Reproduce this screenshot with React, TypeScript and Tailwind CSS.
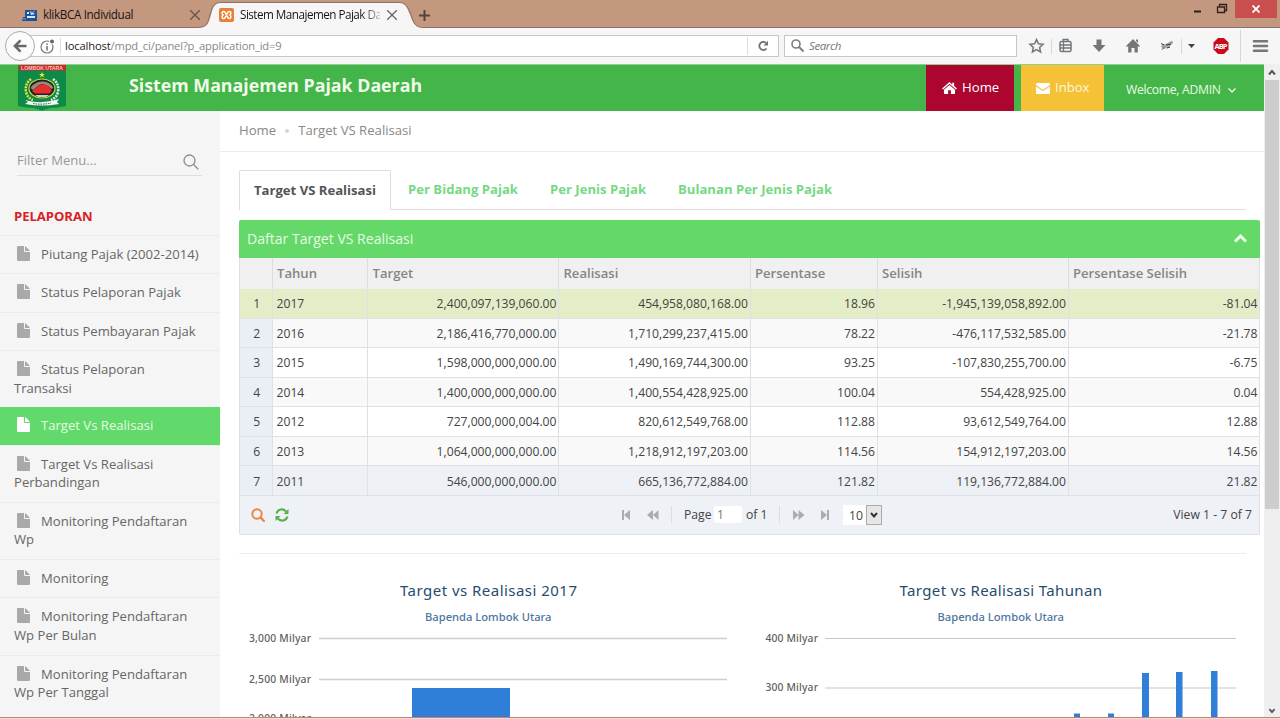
import React from "react";

const reports: { lines: string[]; active?: boolean; h: string }[] = [
  { lines: ["Piutang Pajak (2002-2014)"], h: "h-[38.4px]" },
  { lines: ["Status Pelaporan Pajak"], h: "h-[38.4px]" },
  { lines: ["Status Pembayaran Pajak"], h: "h-[38.4px]" },
  { lines: ["Status Pelaporan", "Transaksi"], h: "h-[57px]" },
  { lines: ["Target Vs Realisasi"], active: true, h: "h-[37.4px]" },
  { lines: ["Target Vs Realisasi", "Perbandingan"], h: "h-[57.2px]" },
  { lines: ["Monitoring Pendaftaran", "Wp"], h: "h-[57.2px]" },
  { lines: ["Monitoring"], h: "h-[38.4px]" },
  { lines: ["Monitoring Pendaftaran", "Wp Per Bulan"], h: "h-[57.2px]" },
  { lines: ["Monitoring Pendaftaran", "Wp Per Tanggal"], h: "h-[57.2px]" },
];

const columns = ["", "Tahun", "Target", "Realisasi", "Persentase", "Selisih", "Persentase Selisih"];

const rows = [
  ["2017", "2,400,097,139,060.00", "454,958,080,168.00", "18.96", "-1,945,139,058,892.00", "-81.04"],
  ["2016", "2,186,416,770,000.00", "1,710,299,237,415.00", "78.22", "-476,117,532,585.00", "-21.78"],
  ["2015", "1,598,000,000,000.00", "1,490,169,744,300.00", "93.25", "-107,830,255,700.00", "-6.75"],
  ["2014", "1,400,000,000,000.00", "1,400,554,428,925.00", "100.04", "554,428,925.00", "0.04"],
  ["2012", "727,000,000,004.00", "820,612,549,768.00", "112.88", "93,612,549,764.00", "12.88"],
  ["2013", "1,064,000,000,000.00", "1,218,912,197,203.00", "114.56", "154,912,197,203.00", "14.56"],
  ["2011", "546,000,000,000.00", "665,136,772,884.00", "121.82", "119,136,772,884.00", "21.82"],
];

const gridCols = "grid grid-cols-[32.5px_95.5px_191px_191.5px_127px_191px_191.5px]";

function FileIcon({ active }: { active?: boolean }) {
  return (
    <svg viewBox="0 0 13 15" className={`mr-[11px] ml-[3px] inline-block h-[15px] w-[13px] align-[-2px] ${active ? "fill-white" : "fill-[#a9a9ab]"}`}>
      <path d="M0 1Q0 0 1 0H7V5Q7 6 8 6H13V14Q13 15 12 15H1Q0 15 0 14Z" />
      <path d="M8 .2Q8.6.4 9 .8L12.2 4Q12.6 4.4 12.8 5H8Z" />
    </svg>
  );
}

function RegionLogo() {
  return (
    <svg viewBox="0 0 48 47" className="h-[47px] w-12">
      <path d="M0 1H48V42Q40 44 32 44Q27 45 24 47Q21 45 16 44Q8 44 0 42Z" fill="#0c8a47" />
      <path d="M1 1H48V6.500H1Z" fill="#d8232d" />
      <text x="24" y="5.500" textAnchor="middle" textLength="42" lengthAdjust="spacingAndGlyphs" fontSize="5" fontWeight="700" fill="#f5c5bf" fontFamily="Liberation Sans, sans-serif">LOMBOK UTARA</text>
      <path d="M24 8l.8 2h2.1l-1.700 1.300.7 2.100-1.900-1.300-1.900 1.300.7-2.100L21.100 10h2.100Z" fill="#f5e92a" />
      <path d="M13 15Q6.500 20 8 28Q9.500 34 15 36" fill="none" stroke="#e6e04a" strokeWidth="2.500" strokeDasharray="2 1" />
      <path d="M35 15Q41.500 20 40 28Q38.500 34 33 36" fill="none" stroke="#e5eedb" strokeWidth="2.500" strokeDasharray="2 1" />
      <ellipse cx="24" cy="24.500" rx="13" ry="9.500" fill="#1d241e" stroke="#c5d34a" strokeWidth="1.200" />
      <path d="M12.500 24Q16 18 24 17.500T35.500 24L33 25Q28 19.500 22 20.500L15 26Z" fill="#a08679" />
      <path d="M14 27L22 21Q26 19.500 30 22L34 27L31 29.500H17Z" fill="#e92e2d" />
      <path d="M17 31H31L28 33H20Z" fill="#ccd6c8" />
      <path d="M7 36Q24 41 41 35L39 38L41 40Q24 43 7 40L10 38Z" fill="#f3f6ef" />
      <path d="M15 39.500Q24 41 33 39" stroke="#39463d" strokeWidth="1" strokeDasharray="1.500 1" fill="none" />
    </svg>
  );
}

function TabStrip() {
  return (
    <div className="relative flex h-7 shrink-0 bg-[#c4977f] text-[#1c1512]">
      <svg viewBox="0 0 1280 28" className="absolute inset-0 h-7 w-[1280px]">
        <path d="M0 27.500H198C207 27.500 208 22 210 15C212 7 214 2.500 221 2.500H399C406 2.500 408 7 411 15C414 23 415 27.500 423 27.500H1280" fill="none" stroke="#8b706a" />
        <path d="M198 28C208 28 209 22 211 15C213 7 215 3 221 3H399C405 3 407 7 410 15C413 23 415 28 423 28Z" fill="#f6f6f6" />
      </svg>
      <div className="relative flex h-7 w-[212px] items-center pt-[2px] pl-[22px]">
        <svg viewBox="0 0 16 13" className="h-[13px] w-4">
          <path d="M3 1H15V12H0L1 8H3Z" fill="#1e5496" />
          <path d="M5 3H7V5H5ZM8 2L13 5L9 6ZM5 7H13V9H5Z" fill="#d6e6f5" />
          <path d="M1 10H4M9 4L13 2" stroke="#79aadb" />
        </svg>
        <span className="ml-[5px] w-[147px] whitespace-nowrap text-[11.7px] tracking-[-0.36px]">klikBCA Individual</span>
        <svg viewBox="0 0 10 10" className="h-[10px] w-[10px] stroke-[#6b534a]"><path d="M0 0L10 10M10 0L0 10" strokeWidth="1.300" /></svg>
      </div>
      <div className="relative flex h-7 items-center pt-[2px] pl-[7px]">
        <svg viewBox="0 0 15 14" className="h-[14px] w-[15px]">
          <rect width="15" height="14" rx="2" fill="#ea8038" />
          <path d="M4.800 3.500C2.500 3.500 2.500 6.500 4.500 7C2.500 7.500 2.500 10.500 4.800 10.500C6.800 10.500 6.300 7.600 7.500 7.600S8.200 10.500 10.200 10.500C12.500 10.500 12.500 7.500 10.500 7C12.500 6.500 12.500 3.500 10.200 3.500C8.200 3.500 8.700 6.400 7.500 6.400S6.800 3.500 4.800 3.500Z" fill="none" stroke="#fff" strokeWidth="1.400" />
        </svg>
        <span className="ml-[6px] w-[140px] overflow-hidden bg-linear-to-r from-[#151515] from-85% to-[#bbb] bg-clip-text whitespace-nowrap text-[11.7px] tracking-[-0.52px] text-transparent">Sistem Manajemen Pajak Da</span>
        <svg viewBox="0 0 10 10" className="ml-[7px] h-[10px] w-[10px] stroke-[#666]"><path d="M0 0L10 10M10 0L0 10" strokeWidth="1.300" /></svg>
        <svg viewBox="0 0 11 11" className="ml-[22px] h-[11px] w-[11px] stroke-[#54443d]"><path d="M5.500 0V11M0 5.500H11" strokeWidth="2" /></svg>
      </div>
      <div className="relative ml-auto flex">
        <svg viewBox="0 0 60 20" className="h-5 w-[60px]" fill="none" stroke="#2b211d">
          <path d="M19 11.500H26" strokeWidth="2" />
          <path d="M42.500 7H49.500V12.500H42.500ZM44.500 6V4.500H51.500V10.500H50" strokeWidth="1.300" />
        </svg>
        <div className="mr-[3px] flex h-[18px] w-[42px] items-center justify-center bg-[#c94f4e]">
          <svg viewBox="0 0 8 8" className="h-2 w-2 stroke-white"><path d="M.5.5L7.500 7.500M7.500.5L.5 7.500" strokeWidth="1.800" /></svg>
        </div>
      </div>
    </div>
  );
}

function Toolbar() {
  return (
    <div className="relative flex h-9 shrink-0 items-center bg-[#f6f6f6] pl-5">
      <div className="flex h-[22px] w-[759px] items-center border border-[#c3c6ca] bg-white pl-[19px]">
        <svg viewBox="0 0 16 16" className="-mt-px h-4 w-4">
          <circle cx="7" cy="9" r="6" fill="none" stroke="#777" strokeWidth="1.200" />
          <circle cx="12" cy="3.500" r="3" fill="#fff" /><circle cx="12" cy="3.500" r="2" fill="#666" />
          <path d="M7 8V12.500M7 5.500V7" stroke="#777" strokeWidth="1.600" />
        </svg>
        <div className="ml-[4px] h-4 w-px bg-[#ddd]" />
        <span className="ml-[4px] text-[11.2px] tracking-[-0.15px] whitespace-nowrap text-[#888]"><span className="text-[#222]">localhost</span>/mpd_ci/panel?p_application_id=9</span>
        <div className="ml-auto h-[18px] w-px bg-[#ddd]" />
        <svg viewBox="0 0 12 12" className="mr-[9px] ml-[9px] h-3 w-3"><path d="M9.500 8.500A4 4 0 1 1 8.800 2.800" fill="none" stroke="#707070" strokeWidth="1.900" /><path d="M6.500 5.500H11V.8Z" fill="#707070" /></svg>
      </div>
      <div className="ml-[5px] flex h-[22px] w-[233px] items-center border border-[#c3c6ca] bg-white pl-[6px]">
        <svg viewBox="0 0 14 14" className="h-[14px] w-[14px]" fill="none" stroke="#7d7d7d"><circle cx="5" cy="5" r="4" strokeWidth="1.600" /><path d="M8 8L12.500 12.500" strokeWidth="2" /></svg>
        <span className="ml-[4px] text-[11.5px] tracking-[-0.4px] text-[#777] italic">Search</span>
      </div>
      <svg viewBox="0 0 263 36" className="h-9 w-[263px]" fill="none" stroke="#73777b">
        <path d="M19.500 11.500L21.400 15.800L26 16.300L22.600 19.500L23.600 24L19.500 21.700L15.400 24L16.400 19.500L13 16.300L17.600 15.800Z" strokeWidth="1.500" />
        <path d="M34.500 11V26M164.500 11V26M223.500 2V34" stroke="#d8d8d8" />
        <rect x="43" y="13.500" width="11" height="10" rx="1.500" strokeWidth="1.500" />
        <path d="M46 13V11.500H51V13M43 17H54M43 20H54M46.500 14V23" strokeWidth="1.300" />
        <path d="M79.500 11.500H84.500V17H88.500L82 24L75.500 17H79.500Z" fill="#73777b" stroke="none" />
        <path d="M116 11L123 18L122 19L120.800 18V24.500H117.500V20H114.500V24.500H111.200V18L110 19L109 18ZM119 11.500H121V15L119 13Z" fill="#73777b" stroke="none" />
        <path d="M144 19Q145 15.500 149 16L154 13Q157 12.500 155.500 15.500L152 19L147 21Z" fill="#a4a6a8" stroke="none" />
        <path d="M144 15.500L147 17M149 17L154 16M145 21.500L147 19.500M150 20L153 19" stroke="#36393b" />
        <path d="M171 16H178L174.500 20Z" fill="#444" stroke="none" />
        <path d="M201 10H207L211.500 14.500V21.500L207 26H201L196.500 21.500V14.500Z" fill="#c70d1c" stroke="none" />
        <text x="204" y="21" textAnchor="middle" textLength="13" fontSize="7.500" fontWeight="700" fill="#fff" stroke="none" fontFamily="Open Sans, sans-serif">ABP</text>
        <path d="M237 13.200H250M237 18H250M237 22.800H250" strokeWidth="2.600" strokeLinecap="round" />
      </svg>
      <div className="absolute top-[3px] left-[5px] flex h-[30px] w-[30px] items-center justify-center rounded-full border border-[#a9a9ad] bg-[#fbfbfb]">
        <svg viewBox="0 0 14 14" className="h-[14px] w-[14px]" fill="none" stroke="#666a6e" strokeWidth="2.600"><path d="M13.500 7H2M7.500 1.300L1.900 7L7.500 12.700" /></svg>
      </div>
    </div>
  );
}

function Header() {
  return (
    <header className="flex h-[47px] shrink-0 border-t border-[#8fcf92] bg-[#43b549] text-white">
      <div className="-mt-px ml-[18px] h-[47px] w-12"><RegionLogo /></div>
      <h1 className="mt-[8px] ml-[63px] text-[17.800px] leading-[25px] font-bold whitespace-nowrap text-[#effbe9]">Sistem Manajemen Pajak Daerah</h1>
      <div className="ml-auto flex h-[46px] w-[88px] items-center bg-[#ab0530] pl-4 text-[13.200px]">
        <svg viewBox="0 0 16 13" className="h-[12px] w-[15px] fill-white"><path d="M8 0L11 2.600V.8H13V4.400L16 7L15 8L8 2L1 8L0 7ZM8 3.200L14 8.300V12.300Q14 13 13.300 13H9.500V9H6.500V13H2.700Q2 13 2 12.300V8.300Z" /></svg>
        <span className="ml-[5px]">Home</span>
      </div>
      <div className="ml-[7px] flex h-[46px] w-[83px] items-center bg-[#f5c136] pl-[15px] text-[13.100px] text-[#fff8df]">
        <svg viewBox="0 0 14 11" className="mt-px h-[11px] w-[14px] fill-white"><path d="M0 1Q0 0 1 0H13Q14 0 14 1Q14 2 13 2.700L8 6.300Q7 7 6 6.300L1 2.700Q0 2 0 1ZM0 3.500L5.500 7.300Q7 8.300 8.500 7.300L14 3.500V10Q14 11 13 11H1Q0 11 0 10Z" /></svg>
        <span className="ml-[5px]">Inbox</span>
      </div>
      <div className="flex w-[160px] items-center pt-[4px] pl-[22px] text-[12.200px] tracking-[-0.3px] whitespace-nowrap text-[#eafbe4]">
        Welcome, ADMIN
        <svg viewBox="0 0 8 5" className="ml-[7px] h-[5px] w-2" fill="none" stroke="#fff" strokeWidth="1.200"><path d="M.5.500L4 4L7.500.5" /></svg>
      </div>
    </header>
  );
}

function Sidebar() {
  return (
    <aside className="h-[606px] w-[220px] shrink-0 overflow-hidden bg-[#f5f5f5] text-[13.1px] leading-[18.7px] text-[#666]">
      <div className="mt-[34px] ml-[17px] flex h-[31px] w-[185px] items-center border-b border-[#dedede] pr-[3px]">
        <span className="text-[13.1px] text-[#999]">Filter Menu...</span>
        <svg viewBox="0 0 16 16" className="mt-[3px] ml-auto h-4 w-4" fill="none" stroke="#8c8c8c" strokeWidth="1.300"><circle cx="6.500" cy="6.500" r="5.500" /><path d="M10.500 10.500L15.300 15.300" /></svg>
      </div>
      <div className="mt-[31px] h-[28px] pl-[14px] text-[13.1px] font-bold tracking-[-0.05px] text-[#d91e27]">PELAPORAN</div>
      <nav>
        {reports.map((item, i) => (
          <div key={i} className={`${item.h} pt-[9px] pl-[14px] whitespace-nowrap ${item.active ? "bg-[#62d96b] text-[#e6fbe4]" : "border-t border-[#ebebeb]"}`}>
            <FileIcon active={item.active} />
            {item.lines[0]}
            {item.lines[1] && <><br />{item.lines[1]}</>}
          </div>
        ))}
      </nav>
    </aside>
  );
}

function Pager() {
  return (
    <div className="flex h-[38px] items-center bg-[#eef1f6] text-[12.2px] text-[#444]">
      <svg viewBox="0 0 14 14" className="ml-[11px] h-[14px] w-[14px]" fill="none" stroke="#ee8544"><circle cx="6" cy="6" r="4.700" strokeWidth="2" /><path d="M9.500 9.500L13 13" strokeWidth="2.400" strokeLinecap="round" /></svg>
      <svg viewBox="0 0 14 14" className="ml-[10px] h-[14px] w-[14px]" fill="none" stroke="#5cae49" strokeWidth="2.100"><path d="M1.500 5.500A5.500 5.500 0 0 1 11.200 3.600M12.500 8.500A5.500 5.500 0 0 1 2.800 10.400" /><path d="M13.500 1V6H8.500ZM.5 13V8H5.500Z" fill="#5cae49" stroke="none" /></svg>
      <svg viewBox="0 0 38 10" className="ml-[332px] h-[10px] w-[38px] fill-[#a9adb3]"><path d="M1 0H3V10H1ZM9 0V10L3 5ZM32 0V10L26 5ZM37.500 0V10L32 5Z" /></svg>
      <div className="ml-[12px] h-[17px] w-px bg-[#dadde2]" />
      <span className="ml-[12px] w-[28px]">Page</span>
      <span className="ml-[2px] h-[17px] w-[28px] rounded-[2px] bg-white pl-[3px] text-[12px] leading-[17px] text-[#777]">1</span>
      <span className="ml-[4px] w-[22px] whitespace-nowrap">of 1</span>
      <div className="ml-[11px] h-[17px] w-px bg-[#dadde2]" />
      <svg viewBox="0 0 38 10" className="ml-[12px] h-[10px] w-[38px] fill-[#a9adb3]"><path d="M1 0V10L6.500 5ZM6.500 0V10L12.500 5ZM29 0V10L35 5ZM35 0H37V10H35Z" /></svg>
      <div className="ml-[13px] flex h-5 w-[39px] items-center bg-white">
        <span className="w-[23px] pt-[3px] pl-[6px] text-[12.2px]">10</span>
        <span className="flex h-5 w-4 items-center justify-center border border-[#aaa] bg-[#e6e6e6]">
          <svg viewBox="0 0 8 6" className="h-[6px] w-2" fill="none" stroke="#333" strokeWidth="2"><path d="M1 1L4 4.500L7 1" /></svg>
        </span>
      </div>
      <span className="mr-[7px] ml-auto">View 1 - 7 of 7</span>
    </div>
  );
}

function DataGrid() {
  return (
    <section className="mt-[10px] ml-[19px] w-[1021px]">
      <div className="flex h-[37.500px] items-center rounded-t-[2px] bg-[#64d869] pr-[13px] pl-[8px] text-[14.050px] text-[#e6fbe3]">
        Daftar Target VS Realisasi
        <svg viewBox="0 0 13 9" className="ml-auto h-[9px] w-[13px]" fill="none" stroke="#effde9" strokeWidth="3"><path d="M1 7.500L6.500 2L12 7.500" /></svg>
      </div>
      <div className="border-l border-[#dde0e4]">
        <div className={`${gridCols} h-[31.500px] bg-[#f0f0f0] text-[13.100px] text-[#858585]`}>
          {columns.map((c, i) => (
            <div key={i} className="flex items-center border-r border-[#dcdde0] pt-px pl-[4.500px] font-semibold">{c}</div>
          ))}
        </div>
        {rows.map((row, r) => (
          <div key={r} className={`${gridCols} h-[29.570px] text-[12.150px] text-[#444] ${r === 0 ? "bg-[#e3edc8]" : r === 6 ? "bg-[#edf1f6]" : r % 2 ? "bg-[#f9f9f9]" : "bg-white"}`}>
            <div className={`flex items-center justify-center border-r border-b border-[#dfe1e4] pt-[2px] pl-[2px] ${r ? "bg-[#eaeff6]" : ""}`}>{r + 1}</div>
            {row.map((v, i) => (
              <div key={i} className={`flex items-center border-r border-b border-[#dfe1e4] pt-[2px] ${i ? "justify-end pr-[1.500px]" : "pl-[4px]"}`}>{v}</div>
            ))}
          </div>
        ))}
      </div>
      <div className="rounded-b-[2px] border border-t-0 border-[#dde0e4]"><Pager /></div>
    </section>
  );
}

const chartFont = "Noto Sans, Open Sans, sans-serif";

function YearChart() {
  return (
    <svg viewBox="239 560 500 157" className="h-[157px] w-[500px]" fontFamily={chartFont}>
      <text x="400" y="596" textLength="177" fontSize="15" fill="#274b6d">Target vs Realisasi 2017</text>
      <text x="425" y="621" textLength="126.500" fontSize="11.200" fontWeight="500" fill="#4d759e">Bapenda Lombok Utara</text>
      <path d="M319 638.500H727M319 679.500H727" stroke="#cfcfcf" strokeWidth="1.300" />
      <g fontSize="10.300" fontWeight="500" fill="#606060">
        <text x="249" y="642" textLength="62">3,000 Milyar</text>
        <text x="249" y="683" textLength="62">2,500 Milyar</text>
        <text x="249" y="722" textLength="62">2,000 Milyar</text>
      </g>
      <rect x="412" y="688" width="98" height="30" fill="#2f7ed8" />
    </svg>
  );
}

function AnnualChart() {
  return (
    <svg viewBox="739 560 510 157" className="h-[157px] w-[510px]" fontFamily={chartFont}>
      <text x="899.500" y="596" textLength="202.500" fontSize="15" fill="#274b6d">Target vs Realisasi Tahunan</text>
      <text x="937.500" y="621" textLength="126.500" fontSize="11.200" fontWeight="500" fill="#4d759e">Bapenda Lombok Utara</text>
      <path d="M825 638.500H1236M825 688H1236" stroke="#c6c6c6" strokeWidth="1.200" />
      <g fontSize="10.300" fontWeight="500" fill="#606060">
        <text x="765.500" y="642" textLength="52.500">400 Milyar</text>
        <text x="765.500" y="691" textLength="52.500">300 Milyar</text>
      </g>
      <path d="M1074 713.500H1080V718H1074ZM1108 713.500H1114V718H1108ZM1142 673H1149V718H1142ZM1176 672H1182.500V718H1176ZM1211 671H1217.500V718H1211Z" fill="#2f7ed8" />
    </svg>
  );
}

function Content() {
  return (
    <main className="flex h-[606px] w-[1044px] flex-col bg-white">
      <div className="flex h-[41px] items-center border-b border-[#ebebeb] pl-[19px] text-[13.150px] text-[#888]">
        <span>Home</span><span className="mx-[9px] h-1 w-1 rounded-full bg-[#d5d5d5]" /><span>Target VS Realisasi</span>
      </div>
      <div className="mt-[18px] ml-[19px] flex h-[40px] w-[1007px] text-[13.120px] font-bold whitespace-nowrap text-[#76d983]">
        <div className="flex w-[152px] items-center justify-center rounded-t-[2px] border border-b-0 border-[#ddd] text-[#555]">Target VS Realisasi</div>
        <div className="flex flex-1 items-center border-b border-[#e8dddd] pt-px pl-[17px]">
          <span className="w-[142px]">Per Bidang Pajak</span>
          <span className="w-[128px]">Per Jenis Pajak</span>
          <span>Bulanan Per Jenis Pajak</span>
        </div>
      </div>
      <DataGrid />
      <div className="mt-[18.500px] ml-[19px] w-[1007px] border-t border-[#eee]" />
      <div className="mt-auto flex pl-[19px]"><YearChart /><AnnualChart /></div>
    </main>
  );
}

function Scrollbar() {
  return (
    <div className="flex w-4 shrink-0 flex-col items-center bg-[#efefef]">
      <svg viewBox="0 0 16 16" className="h-4 w-4" fill="none" stroke="#555" strokeWidth="2"><path d="M5 10.500L8 7L11 10.500" /></svg>
      <div className="h-[429px] w-[14px] bg-[#cdcdcd]" />
      <svg viewBox="0 0 16 16" className="mt-auto h-[14px] w-4" fill="none" stroke="#555" strokeWidth="2"><path d="M5 7L8 10.500L11 7" /></svg>
    </div>
  );
}

export default function App() {
  return (
    <div className="flex h-[719px] w-[1280px] flex-col overflow-hidden bg-white font-['Open_Sans','Noto_Sans',sans-serif]">
      <TabStrip />
      <Toolbar />
      <div className="flex h-[653px] shrink-0">
        <div className="flex w-[1264px] flex-col">
          <Header />
          <div className="flex"><Sidebar /><Content /></div>
        </div>
        <Scrollbar />
      </div>
      <div className="h-[2px] shrink-0 border-t border-[#bd8575] bg-[#f5dcd2]" />
    </div>
  );
}
